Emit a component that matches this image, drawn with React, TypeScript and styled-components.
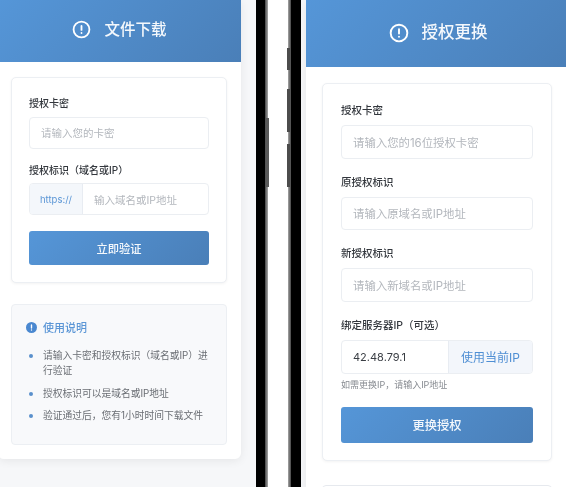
import React, { FC } from 'react'
import styled, { createGlobalStyle } from 'styled-components'

const GlobalStyle = createGlobalStyle`
  html, body {
    margin: 0;
    padding: 0;
    background: #fff;
  }
  * {
    box-sizing: border-box;
  }
`

interface SizeProps {
  $big?: boolean
}

const AlertIcon: FC<{ size: number }> = ({ size }) => (
  <svg width={size} height={size} viewBox="0 0 24 24" fill="none" stroke="#fff" strokeWidth="2.3" strokeLinecap="round">
    <circle cx="12" cy="12" r="10" />
    <line x1="12" y1="7.5" x2="12" y2="12.5" />
    <line x1="12" y1="16.3" x2="12" y2="16.4" />
  </svg>
)

const InfoDot = () => (
  <svg width="11" height="11" viewBox="0 0 24 24">
    <circle cx="12" cy="12" r="12" fill="#4a88d0" />
    <line x1="12" y1="6.5" x2="12" y2="13" stroke="#fff" strokeWidth="3" strokeLinecap="round" />
    <line x1="12" y1="17.5" x2="12" y2="17.6" stroke="#fff" strokeWidth="3" strokeLinecap="round" />
  </svg>
)

const Field: FC<{ label: string; big?: boolean; children: React.ReactNode }> = ({ label, big, children }) => (
  <FieldWrap $big={big}>
    <Label $big={big}>{label}</Label>
    {children}
  </FieldWrap>
)

const App: FC = () => {
  return (
    <Screen>
      <GlobalStyle />
      <LeftPhone>
        <PageCard>
          <Header>
            <AlertIcon size={19} />
            <HeaderTitle>文件下载</HeaderTitle>
          </Header>
          <CardBody>
            <FormCard>
              <Field label="授权卡密">
                <TextBox>请输入您的卡密</TextBox>
              </Field>
              <Field label="授权标识（域名或IP）">
                <Group>
                  <Prefix>https://</Prefix>
                  <GroupText>输入域名或IP地址</GroupText>
                </Group>
              </Field>
              <SubmitButton>立即验证</SubmitButton>
            </FormCard>
            <InfoCard>
              <InfoTitle>
                <InfoDot />
                使用说明
              </InfoTitle>
              <InfoList>
                <InfoItem>请输入卡密和授权标识（域名或IP）进行验证</InfoItem>
                <InfoItem>授权标识可以是域名或IP地址</InfoItem>
                <InfoItem>验证通过后，您有1小时时间下载文件</InfoItem>
              </InfoList>
            </InfoCard>
          </CardBody>
        </PageCard>
      </LeftPhone>

      <Bezel $edge="right">
        <SideKey style={{ top: 118, height: 69 }} />
      </Bezel>
      <Gap />
      <Bezel $edge="left">
        <LeftKey style={{ top: 48, height: 22 }} />
        <LeftKey style={{ top: 89, height: 43 }} />
        <LeftKey style={{ top: 144, height: 43 }} />
      </Bezel>

      <RightPhone>
        <RightCard>
          <Header $big>
            <AlertIcon size={20} />
            <HeaderTitle $big>授权更换</HeaderTitle>
          </Header>
          <CardBody $big>
            <FormCard $big>
              <Field big label="授权卡密">
                <TextBox $big>请输入您的16位授权卡密</TextBox>
              </Field>
              <Field big label="原授权标识">
                <TextBox $big>请输入原域名或IP地址</TextBox>
              </Field>
              <Field big label="新授权标识">
                <TextBox $big>请输入新域名或IP地址</TextBox>
              </Field>
              <Field big label="绑定服务器IP（可选）">
                <Group $big>
                  <GroupValue>42.48.79.1</GroupValue>
                  <UseIp>使用当前IP</UseIp>
                </Group>
                <Hint>如需更换IP，请输入IP地址</Hint>
              </Field>
              <SubmitButton $big>更换授权</SubmitButton>
            </FormCard>
            <NextCard />
          </CardBody>
        </RightCard>
      </RightPhone>
    </Screen>
  )
}

export default App

const Screen = styled.div`
  position: relative;
  display: flex;
  width: 566px;
  height: 487px;
  overflow: hidden;
  font-family: Inter, "Noto Sans CJK SC", sans-serif;
  background: #fff;
  filter: blur(0.4px);
`

const LeftPhone = styled.div`
  flex: 0 0 256px;
  height: 100%;
  background: #f6f7f9;
  overflow: hidden;
`

const PageCard = styled.div`
  width: 243px;
  margin-left: -2px;
  height: 459px;
  background: #fff;
  border-radius: 0 0 6px 6px;
  box-shadow: 0 2px 10px rgba(0, 0, 0, 0.07);
`

const Bezel = styled.div<{ $edge: 'left' | 'right' }>`
  position: relative;
  flex: 0 0 ${({ $edge }) => ($edge === 'right' ? '12px' : '13px')};
  height: 100%;
  background: linear-gradient(
    to ${({ $edge }) => $edge},
    #000 0,
    #000 calc(100% - 3px),
    #444 calc(100% - 3px),
    #a8a8a8 100%
  );
`

const SideKey = styled.div`
  position: absolute;
  right: -1px;
  width: 3px;
  background: #5a5a5a;
`

const LeftKey = styled.div`
  position: absolute;
  left: -1px;
  width: 3px;
  background: #4c4c4c;
`

const Gap = styled.div`
  flex: 0 0 20px;
  height: 100%;
  background: #fff;
`

const RightPhone = styled.div`
  flex: 1;
  height: 100%;
  background: #f6f7f9;
  padding-left: 5px;
  overflow: hidden;
`

const RightCard = styled.div`
  width: 264px;
  min-height: 487px;
  background: #fff;
  box-shadow: 0 2px 10px rgba(0, 0, 0, 0.07);
`

const Header = styled.div<SizeProps>`
  display: flex;
  align-items: center;
  justify-content: center;
  gap: 13px;
  height: ${({ $big }) => ($big ? '67px' : '62px')};
  padding-bottom: ${({ $big }) => ($big ? '2px' : '3px')};
  background: linear-gradient(135deg, #5596d8, #4a7fb8);
  color: #fff;
`

const HeaderTitle = styled.div<SizeProps>`
  font-size: ${({ $big }) => ($big ? '16.5px' : '15.5px')};
  font-weight: 500;
  line-height: 1;
  color: #f4f8fc;
`

const CardBody = styled.div<SizeProps>`
  padding: ${({ $big }) => ($big ? '16px 18px 0 16px' : '15px 14px 0 13px')};
`

const FormCard = styled.div<SizeProps>`
  background: #fff;
  border: 1px solid #eceff3;
  border-radius: 5px;
  box-shadow: 0 1px 3px rgba(0, 0, 0, 0.05);
  padding: ${({ $big }) => ($big ? '20px 18px 17px' : '18px 17px 16.5px')};
`

const FieldWrap = styled.div<SizeProps>`
  margin-bottom: ${({ $big }) => ($big ? '17px' : '14px')};
`

const Label = styled.div<SizeProps>`
  height: 14px;
  line-height: 14px;
  margin-bottom: ${({ $big }) => ($big ? '7px' : '6.5px')};
  font-size: ${({ $big }) => ($big ? '10.5px' : '10px')};
  font-weight: 500;
  color: #33373d;
  white-space: nowrap;
`

const TextBox = styled.div<SizeProps>`
  display: flex;
  align-items: center;
  height: ${({ $big }) => ($big ? '33.5px' : '32px')};
  padding-left: 11px;
  background: #fff;
  border: 1px solid #ebeef2;
  border-radius: 4px;
  font-size: ${({ $big }) => ($big ? '11.4px' : '10.5px')};
  color: #b3b7bd;
`

const Group = styled.div<SizeProps>`
  display: flex;
  align-items: stretch;
  height: ${({ $big }) => ($big ? '34.5px' : '32px')};
  background: #fff;
  border: 1px solid #ebeef2;
  border-radius: 4px;
  overflow: hidden;
`

const Prefix = styled.div`
  display: flex;
  align-items: center;
  justify-content: center;
  flex: 0 0 53px;
  background: #f4f7fb;
  border-right: 1px solid #e8ecf2;
  font-size: 9.5px;
  color: #5b96d6;
`

const GroupText = styled.div`
  display: flex;
  align-items: center;
  padding-left: 11px;
  font-size: 10.5px;
  color: #b3b7bd;
`

const GroupValue = styled.div`
  display: flex;
  align-items: center;
  flex: 1;
  padding-left: 11px;
  font-size: 11px;
  color: #3a3e44;
`

const UseIp = styled.div`
  display: flex;
  align-items: center;
  justify-content: center;
  flex: 0 0 84px;
  background: #f3f6fb;
  border-left: 1px solid #e8ecf2;
  font-size: 12px;
  color: #4f8fd4;
`

const Hint = styled.div`
  height: 12px;
  line-height: 12px;
  margin-top: 5px;
  font-size: 9px;
  color: #878b91;
`

const SubmitButton = styled.div<SizeProps>`
  display: flex;
  align-items: center;
  justify-content: center;
  height: ${({ $big }) => ($big ? '36px' : '34px')};
  margin-top: ${({ $big }) => ($big ? '-1px' : '16px')};
  background: linear-gradient(135deg, #5596d8, #4a7fb8);
  border-radius: 3px;
  font-size: ${({ $big }) => ($big ? '12.25px' : '11.25px')};
  font-weight: 500;
  color: #f4f8fc;
`

const InfoCard = styled.div`
  height: 141px;
  margin-top: 21.5px;
  padding: 15px 14px 0;
  background: #f8f9fb;
  border: 1px solid #eceff3;
  border-radius: 4px;
`

const InfoTitle = styled.div`
  display: flex;
  align-items: center;
  gap: 6px;
  height: 14px;
  font-size: 11px;
  font-weight: 500;
  color: #5b96d6;
`

const InfoList = styled.ul`
  list-style: none;
  margin: 13.5px 0 0;
  padding: 0 0 0 17px;
`

const InfoItem = styled.li`
  position: relative;
  margin-bottom: 7px;
  font-size: 9.75px;
  line-height: 15.5px;
  color: #6a6e74;

  &::before {
    content: '';
    position: absolute;
    left: -14px;
    top: 6px;
    width: 4px;
    height: 4px;
    border-radius: 50%;
    background: #5a90cc;
  }
`

const NextCard = styled.div`
  height: 60px;
  margin-top: 24px;
  background: #fff;
  border: 1px solid #e6e9ee;
  border-radius: 4px;
`
